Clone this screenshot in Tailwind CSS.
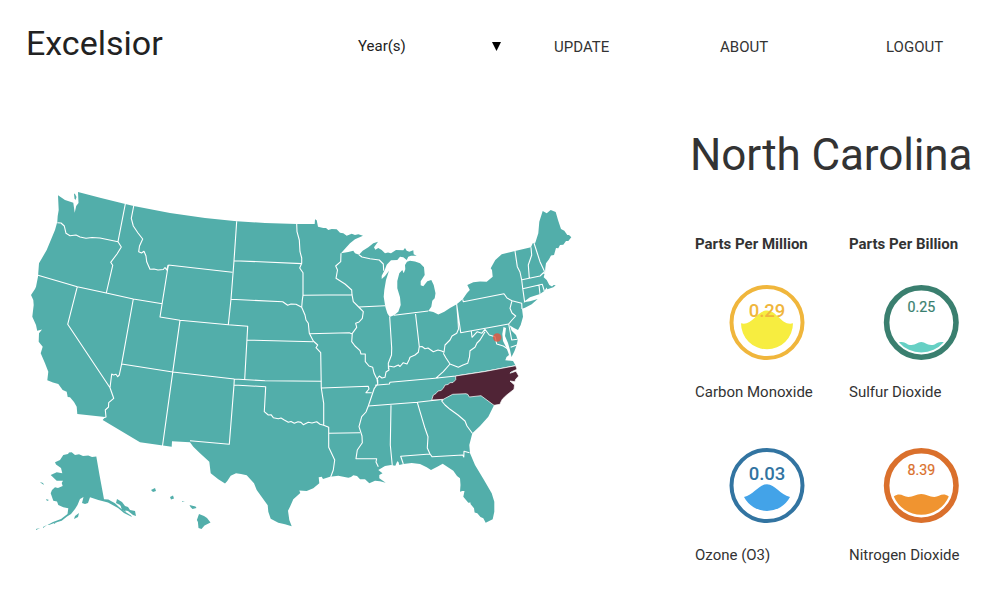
<!DOCTYPE html>
<html lang="en">
<head>
<meta charset="utf-8">
<title>Excelsior</title>
<script src="https://cdn.jsdelivr.net/npm/@tailwindcss/browser@4"></script>
</head>
<body class="bg-white w-[1000px] h-[600px] overflow-hidden font-['Roboto',sans-serif] text-[#333] flex flex-col">
<header class="h-[92px] shrink-0 flex items-center">
  <h1 class="w-[358px] pl-[26px] pb-[6px] text-[34px] leading-none text-[#222]">Excelsior</h1>
  <div class="w-[196px] flex items-center text-[15px] leading-none text-[#222]">
    <span class="w-[134px]">Year(s)</span>
    <svg width="9" height="9" viewBox="0 0 9 9"><path d="M0 0H9L4.5 9Z" fill="#000"/></svg>
  </div>
  <nav class="flex pt-[2px] text-[15px] leading-none">
    <a class="w-[166px]">UPDATE</a><a class="w-[166px]">ABOUT</a><a>LOGOUT</a>
  </nav>
</header>
<main class="flex h-[508px]">
  <svg class="w-[690px] h-[508px] shrink-0" viewBox="0 92 690 508">
    <g fill="#52aeaa">
      <path d="M78 192L101 198L125.3 204L133.7 206L170 213L205 218L236.7 221.3L265 223L296.7 224L314.7 224L315 219.3L316.7 220.3L318 226.7L323.3 228L326 228L328.3 230L331.7 229L336.7 229.3L340 232.7L343.3 233.3L346.7 235.7L351.7 233.7L355 235L358.3 234.2L363 235.7L355 239.3L350 243.3L345 248.7L341 253.3L348.3 252L353.3 250.7L355 253.3L359 254.7L362.7 250.7L368.3 247.3L373.3 243.3L378 241.7L374 247.3L375.3 249.7L378.3 248L381.7 250L385 253.3L388 252.6L391 253.3L396 250L403.3 250.3L405 248L406.7 250.7L409.3 251.7L413.3 250.3L413.7 254.3L416.7 255.8L411 255.8L408.3 256.7L406.7 260L403.3 257.3L400 256.7L397.3 260L391 260.3L386.7 264.7L384.7 270L381.7 275.7L381.7 279L385 276L389 270.7L386 280L384.3 290L383.7 296.7L385.3 306.7L387.3 313.3L389.7 317L394 315.3L398.3 311.7L400.7 305L400 297.3L397.3 288.3L397.3 281L399.3 273.3L402.3 270L403.7 273.3L405.3 269.3L405 265L407 261.7L410 260.7L415 261.6L420 263.3L424 267.3L424.7 275L420.7 281.3L420.7 285.3L423.3 286.3L427.3 281.3L431.3 280L433.7 285L435.5 293.3L434.7 298.3L432.3 300.7L431.3 306.7L428.3 311L433.3 312L438.3 314.5L444.3 311.7L450 308L456.7 304.3L462.7 299.3L467 293L469.8 290L467.3 285L473.3 282.3L480 281.6L486.7 281.7L492.7 276.7L492 270L490.7 268.3L495.3 260L501.7 254.3L515 251L531 247.3L532.7 243.3L535.3 242.7L538.3 233.3L539.3 221.7L542.7 211L546.7 213.3L550.7 210L555.7 212L558 220L561 229L564.3 230.7L567.3 235L569 235L571.3 237.3L568.3 241L566 241L563.3 244.7L560 245L558.3 248.3L556 248L554 255L551 255.5L549 259.3L546 263.3L545.3 268L545 272L543.7 277.3L546.7 280L549.3 285L552 286.5L553.7 285L555.7 285.3L553.3 287.3L547.3 289.3L546.7 287.5L544.3 291L540 294L530 297.3L523.3 302.3L530 301.3L537.7 299L531.7 304.3L525 307.7L522 308.7L523 316.7L520.7 325L518 330L514 328L509.6 325.3L511.7 330.7L516 335L517.7 340L516.7 345L514.5 351L511.5 357L510 350L508 343L505 336L506 328L503.5 327L502.3 334L503 341L506 347L508 352L509 355L506.500 357L505.3 360.3L513 361L515.7 365.7L494 405.3L488.3 416.7L480 426L472.3 433.3L469.3 445L470 453.3L475 465L484 480L491.7 493.3L494.3 501.7L494.3 511.7L492.7 519.3L485.7 522.7L483.3 518.3L480.5 517L477.3 513.3L474.6 512.5L474 508.3L470.5 504L470.5 502.5L468.3 502.7L463.3 496.7L464.5 491L462.3 491L460 491.7L460.5 485L460 478.3L457 476L453.3 470.7L442.7 463.7L437.3 466.7L431 470L426.7 467.3L420 464L411.7 463L403.3 464L399.3 465L398.5 462L397.3 461.3L395.3 465.7L391 465L385 466L378.3 470L382.5 473.3L379.3 475L379.3 478.3L385.7 482.7L380 481.3L375 480.7L369.3 483.3L365 479.3L360 479.3L357 476L353.3 475.3L351 477L348.3 477.7L338.3 475.7L330 476.7L323 479L321.7 476.7L318.7 477.3L319.3 483.3L313.3 488.3L306.7 491L299.3 490.5L300.3 493L293.3 499.3L290 506.7L288 510.7L289.3 520L291.7 526.3L285 524.3L278.3 522.7L270.7 518.7L268.3 511.7L267.7 505.3L261 496L256.7 490L254 483.3L246.7 475.3L241 474L236 473.3L230.7 475.7L227.3 481L225 483.6L218.3 479.3L210.7 473.3L209.3 461.7L200 453.3L193.3 446.7L190 442.3L172 441.3L171.7 446.7L140 442.3L102.7 420L105 417L77.3 414L76.7 406.7L74 402L70 397.3L67.7 397L66.7 391.7L62.7 390L58.3 384L53 382.5L47.3 380.3L48.3 371.7L45 363.3L40.7 353.3L42.7 346.7L38.7 341.7L39 333.3L42 329.5L37.2 330.7L36 325L32.3 316.7L33.7 305L33.3 300L31 295L35 289L36 286.7L38 276.7L39 263.3L46.7 250L55 230L57.3 221.7L57.7 216L58.7 210L58 195.3L65 200L73.3 202.7L74.7 212.7L76.2 206L78.5 203Z"/>
      <path d="M74 193.500l1 .5 1.500 3-1 3-1-1.500Z"/>
      <path d="M71.7 452.3L75 455L79 454.3L83 456L88.3 455.5L92 457L96.3 456.5L99.5 475L104 499.3L108.3 499.5L115 503.3L119 507L124 511L131 515.5L132 517L124 513L118 508L108 502.5L98.3 500L90 497.3L88 503L85 504L82 503L83.5 497L80 499L77.5 505L75 509L71 514L66.7 516.7L61.7 520.7L55 522.7L49 525L47.5 525L53 522L61 519L67.5 514L68.3 508.3L63.3 507.3L58.3 505L57 501.5L53.3 500.7L50.7 493.3L52 490L55 487.3L58 488L62.7 486L61.7 483L63 480.7L56.7 480.7L50.7 475L56.7 472.3L62.3 473.3L61 468L56 464.5L55 462.3L60 460L63.3 455L68 454L69 452.5Z"/>
      <path d="M117 499l5 3 3 4 3 1 2 3 5 1 1 5-3-1-5-4-5-1-3-5-4-2ZM121 507l3 1 2 4-4-2ZM75 516l4-3-1 4-4 2ZM40 482l3 1 1 2-3-2ZM46 499l3 1-2 1ZM43 527l4-2-4 3ZM36 529l4-1-4 2ZM54 523l3-1-3 2Z"/>
      <path d="M151 490l4-2 1 3-3 1ZM170 497l3-1.5 1 3-3 1ZM182 501l3 .6-3 .2ZM189.5 505l3 .8 3 .6 1 1.5-4 1-2-2ZM199 514l5 2 3 2 3.500 4.500-6 3-3 3.500-3-1-.6-6-1-2Z"/>
    </g>
    <!-- state borders -->
    <g fill="none" stroke="#fff" stroke-width="1.1" stroke-linejoin="round">
      <path d="M57.300 222.700L61 223L64.300 226L66 233.300L70 235.700L76 235L80 237L86 238.300L92 237.500L100 238L118 241.700M125.300 204L118 241.700L121.300 247L117 254L110.700 262.300L112.700 265.300L106.300 293M38 275.300L77.300 286.700L106.300 293L133.300 299L162.300 303.700M77.300 286.700L67.700 324.300L110 387.700L113.700 398.300L108.700 402.700L108.500 407L105.300 410L106 417L103 418M110 387.700L111.700 374L113.500 375L116 374.300L117.700 376.700L119.300 375L121.700 363.600L133.300 299M121.700 364L172.700 372L234.300 379L265 380.700L321.300 381.300M168.300 265L160 317L180 320.300L228.300 324.700L247.700 326.300L244.700 379.300M168.300 265L232.300 272.300M180 320.300L172.700 372.300L162.500 446M236.700 221.300L234 260.700L231 299.300L228.300 324.700M234 260.700L301.700 263.600M231 299.300L282.700 301.700L287.700 305.300L291 304L296 304.300L301.700 307.300M247 340L313.300 341.700M234.300 379L234 385L229.300 444.300L190 440.700M234 385L265.700 386.700L264.300 411.700L268.300 415L271 414.700L273.300 417.700L278.300 418.700L281 418L284.300 420L288.300 422.300L291 421.400L294.300 423.300L298 421.700L301 422.400L303.300 424.700L308.300 422.300L312 423L316.700 421.700L320 424.300L323.700 425.300"/>
      <path d="M133.700 206L131.300 218.300L133.300 226L138 233L142.700 239L139.500 246L138.700 251.700L141.500 253L144 251.300L146 256L146.700 261.700L150 269.300L154 269L158 270L163.300 269.500L165 267.500L166.700 270L168.300 265"/>
      <path d="M296.700 224L297 231.700L299.300 240L300 251.700L301.700 258L301.700 263.300L299.700 268L303 272.700L303 295.300L302.300 300L301.700 307.300L305 315L306 320L308.300 323.300L309.300 333.300L313.300 341L317.700 345L316 347.700L320.700 352.700L321.300 388L323.700 403.300L323.700 425.300L328.700 427.300L328.700 447.300L334.700 460L333.300 470L330.700 477M328.700 433.300L360 432.700M321.700 388L368.300 386.300L369 389L366 392.700L371.700 392.700M303 295.300L352 294.700M341 253.300L340.700 261.700L335.700 266L337.500 270L336 278.300L345 284L351.700 290L352 294.700L353.300 301.700L358.700 307L363.300 311.700L362.300 318.300L359 322L355.700 323.300L356.700 327.300L352.300 333.300L351.700 341.700L355 346L360 350.700L361 354L365.300 354L365.300 361.700L369 366L372.700 367.300L374 373L376 377.300L377.700 380L377.700 384L374.300 388.300L371.700 396L368.300 406L366 412L361.700 416.700L359 426.700L362 436L362.300 442.700L357.300 450L356 458.700L376.700 458.700L376 462L378.300 466.700M309.300 333.700L349.300 332.700L352.300 334M358.700 307L385 305.700M359 254.700L362 257L370 258.700L379.300 260L383.300 264L383.700 270.700M389.700 317L391.700 348.300L391.500 355L388.300 363.300L388.500 369M377.700 384L377 379L379.300 376L382 378L385 377.300L386 372L389 370L388.500 366L394 367L398.300 365L400 366.500L403.300 362.700L407 364L409 360L410 357.300L415 355L418.300 352.300L419.300 346.700L422 346.500L425 348.700L428 348L433.300 351.700L438 350L441.700 351L444 352.300L445 345L450 340L452 336L456.700 333.300L458.500 329L458 320L456.700 304.300L460.700 332.700L508.700 324M394 315.300L428.300 311M415.300 312L419.300 346.700"/>
      <path d="M462.700 299.300L463.300 301.700L504 293.700L507 298L512 300.700L510 308.300L512 313L515.700 316L512 320L508.700 324L511.700 340L517.500 339.300M512 300.700L521.700 303.300L522 309M515 251L517.300 266.700L520 272L521.700 280L522.700 288.300L524.700 302.300M522 279.700L540 276L543.700 272.500M531 247.300L531.700 255L528.300 265L529.300 278M534 243L540 261.700L544.300 271L544.300 274M522.700 288.700L542.300 284.300L544.300 291M539 285.300L540 294M510.700 347.300L517 345M471.300 331L472 337.300L477.300 331.700L481.700 333.300L485 329.300L487 332L489.300 335L495 336.700L496.700 344L503.300 346L508 349M485 331.700L480 340L477 343L475 347.300L470 350.700L469.500 357L467.700 363.300L463 365L458.300 367.300L450 364L446 358L443.300 353.300M450 364L443.300 371.700L435.700 378.300M375 385.300L389.300 384L390 382.300L435 378.300L455.700 376L485 371.500L515.700 365.700M368.300 406L417.300 402.300L443.300 399.300M391 405.300L390.300 445L392.300 465.700M417.300 402.300L425 428.300L428 436.700L427.300 448L430 454L400.700 456.300L403.300 464M430 454L432 456.700L462.700 455L463.800 457L464 451.300L469.500 452.700M443.300 399.300L441.700 401L445 405L450 409.300L458 415L465 421L467 426L472.300 433.300"/>
    </g>
    <path fill="#502436" stroke="#fff" stroke-width=".7" d="M515.700 365.700L517 369.300L511 372L510 373.200L516 371.200L518.700 376L515.500 379.500L515 381.700L510 381L514.500 385L514 389.300L506.700 395L502.500 399L501 401.700L500 404.300L494 405.300L481 395.700L469.300 397L468 394.500L466 393.700L452.700 394.300L443.300 399.300L431.700 400L433.300 395L436 393.500L438 391L441 390.500L443.300 388.300L445 385L448 384.500L450 382.700L453 382.500L455.700 379.700L455.700 376L485 371.500Z"/>
    <circle cx="497.200" cy="337.500" r="4.200" fill="#e3553f" fill-opacity=".82"/>
  </svg>
  <section class="flex-1">
    <h2 class="mt-[37px] text-[44px] tracking-[-0.1px] leading-[52px] whitespace-nowrap">North Carolina</h2>
    <div class="mt-[54px] ml-[5px] grid grid-cols-[154px_144px] text-[15px] leading-[18px]">
      <strong class="font-bold whitespace-nowrap">Parts Per Million</strong>
      <strong class="font-bold whitespace-nowrap">Parts Per Billion</strong>
      <figure class="mt-[32px] h-[133px]">
        <svg class="block ml-[34px] h-[76px] w-[76px]" viewBox="-38 -37.5 76 76">
          <circle r="35.500" fill="none" stroke="#f0b63c" stroke-width="4"/>
          <path fill="#f7ed40" d="M-26 .8C-15 4-10-12 0-12S15 4 26 .8A26 26 0 0 1-26 .8Z"/>
          <text y="-5.500" text-anchor="middle" font-size="18.500" font-weight="500" fill="#f0b63c">0.29</text>
        </svg>
        <figcaption class="mt-[22px] whitespace-nowrap">Carbon Monoxide</figcaption>
      </figure>
      <figure class="mt-[32px] h-[133px]">
        <svg class="block ml-[34px] h-[76px] w-[76px]" viewBox="-38.300 -37.500 76 76">
          <circle r="34.700" fill="none" stroke="#3a7f6f" stroke-width="5.600"/>
          <path fill="#66d0c4" d="M-22.500 19.800C-16 18-15 22.500-10 22.500S-4 19.500 0 19.500 5 22.500 10 22.500 16 18 22.500 19.800A30 30 0 0 1-22.500 19.800Z"/>
          <text y="-10.500" text-anchor="middle" font-size="14.200" fill="#3a7f6f" stroke="#3a7f6f" stroke-width=".2">0.25</text>
        </svg>
        <figcaption class="mt-[22px] whitespace-nowrap">Sulfur Dioxide</figcaption>
      </figure>
      <figure class="mt-[30px]">
        <svg class="block ml-[34px] h-[76px] w-[76px]" viewBox="-38 -37.5 76 76">
          <circle r="35.500" fill="none" stroke="#3274a1" stroke-width="4"/>
          <path fill="#43a3e8" d="M-23 11.500C-13 9-8-1.300 0-1.300S13 9 23 11.500A26 26 0 0 1-23 11.500Z"/>
          <text y="-5.500" text-anchor="middle" font-size="18.500" font-weight="500" fill="#3274a1">0.03</text>
        </svg>
        <figcaption class="mt-[22px] whitespace-nowrap">Ozone (O3)</figcaption>
      </figure>
      <figure class="mt-[30px]">
        <svg class="block ml-[34px] h-[76px] w-[76px]" viewBox="-38.300 -37.500 76 76">
          <circle r="34.700" fill="none" stroke="#da702c" stroke-width="5.600"/>
          <path fill="#f09430" d="M-27.500 11C-21 6.500-18 11.500-13 11.500S-5 8.500 0 8.500 8 11.500 13 11.500 21 6.500 27.500 11A29.800 29.800 0 0 1-27.500 11Z"/>
          <text y="-10.500" text-anchor="middle" font-size="14.200" fill="#da702c" stroke="#da702c" stroke-width=".2">8.39</text>
        </svg>
        <figcaption class="mt-[22px] whitespace-nowrap">Nitrogen Dioxide</figcaption>
      </figure>
    </div>
  </section>
</main>
</body>
</html>
